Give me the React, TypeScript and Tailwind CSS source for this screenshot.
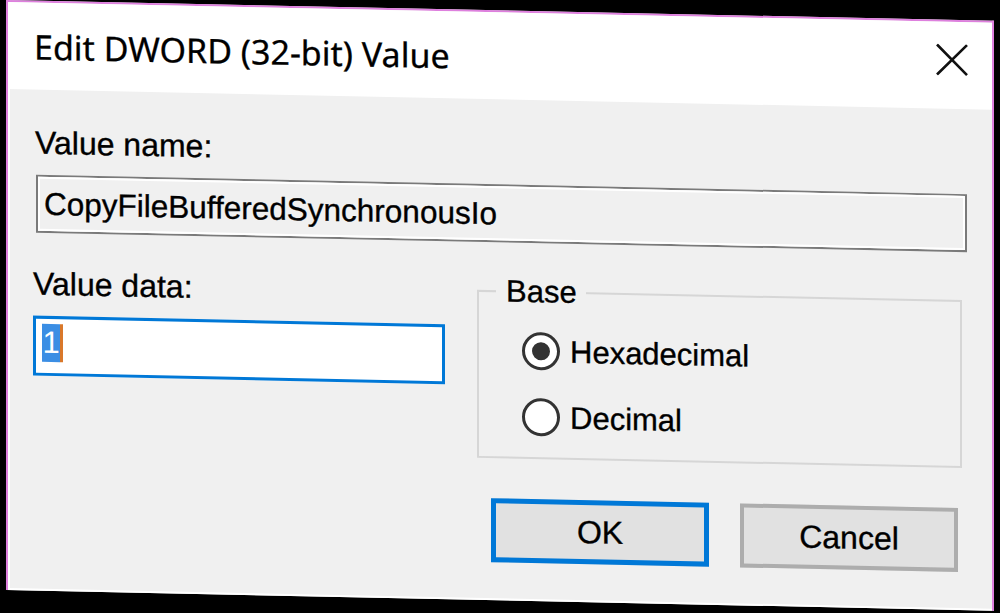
export default function App() {
  return (
    <div className="w-[1000px] h-[613px] bg-black overflow-hidden font-['Liberation_Sans',Arial,sans-serif] text-black">
      <div className="ml-[6px] w-[988px] h-[590px] origin-top-left skew-y-[1.2deg] bg-[#f0f0f0] border-x-2 border-t-2 border-[#de80de] flex flex-col">
        {/* Title bar */}
        <div className="h-[87px] shrink-0 bg-white flex items-center pl-[26px] pr-[24px]">
          <span className="font-['Noto_Sans',sans-serif] text-[34px] leading-none text-black [-webkit-text-stroke:0.3px_#000]">
            Edit DWORD (32-bit) Value
          </span>
          <svg className="ml-auto -mt-[11px]" width="32" height="32" viewBox="0 0 32 32">
            <path d="M1 1L31 31M31 1L1 31" stroke="#111" strokeWidth="2.6" fill="none" />
          </svg>
        </div>

        {/* Body */}
        <div className="flex-1 flex flex-col border-l-2 border-b-2 border-white pl-[25px] [-webkit-text-stroke:0.35px_#000]">
          <div className="mt-[38px] h-[31px] text-[32px] leading-[31px]">Value name:</div>

          <div className="mt-[16px] ml-[1px] w-[931px] h-[58px] border-2 border-[#7a7a7a]">
            <div className="h-full border-2 border-white bg-[#f0f0f0] flex items-center pl-[4px] text-[31.5px] leading-[31px]">
              CopyFileBufferedSynchronousIo
            </div>
          </div>

          <div className="mt-[33px] flex items-start">
            <div className="pt-[3px] -ml-[2px] w-[412px] flex flex-col">
              <div className="h-[31px] text-[32px] leading-[31px]">Value data:</div>
              <div className="mt-[16px] h-[60px] border-[3px] border-[#0078d7] bg-white flex items-start pt-[5px] pl-[6px]">
                <span className="h-[38px] w-[18px] bg-[#3b8ee4] text-white text-[31px] leading-[38px] flex justify-center [-webkit-text-stroke:0px]">1</span>
                <span className="h-[38px] w-[3px] bg-[#d9782a]" />
              </div>
            </div>

            <fieldset className="ml-[32px] w-[485px] h-[183px] border-2 border-[#d6d6d6]">
              <legend className="ml-[17px] pl-[10px] pr-[9px] text-[31px] leading-[31px]">Base</legend>
              <div className="pt-[25px] pl-[43px] flex flex-col">
                <div className="h-[38px] flex items-center gap-[10px]">
                  <span className="w-[38px] h-[38px] rounded-full border-[3px] border-[#333] bg-white flex items-center justify-center">
                    <span className="w-[18px] h-[18px] rounded-full bg-[#333]" />
                  </span>
                  <span className="text-[31px] leading-[31px]">Hexadecimal</span>
                </div>
                <div className="mt-[28px] h-[38px] flex items-center gap-[10px]">
                  <span className="w-[38px] h-[38px] rounded-full border-[3px] border-[#333] bg-white" />
                  <span className="text-[31px] leading-[31px]">Decimal</span>
                </div>
              </div>
            </fieldset>
          </div>

          <div className="mt-[40px] flex justify-end gap-[31px] pr-[34px]">
            <div className="w-[218px] h-[64px] border-[5px] border-[#0078d7] bg-[#e1e1e1] flex items-center justify-center text-[32px] leading-[31px]">
              OK
            </div>
            <div className="w-[218px] h-[64px] border-[4px] border-[#adadad] bg-[#e1e1e1] flex items-center justify-center text-[32px] leading-[31px]">
              Cancel
            </div>
          </div>
        </div>
      </div>
    </div>
  );
}
